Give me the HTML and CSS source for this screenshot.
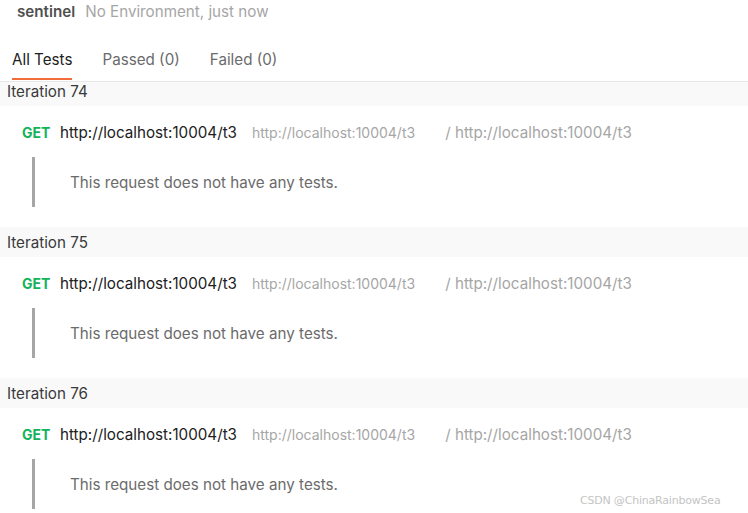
FILE: index.html
```html
<!DOCTYPE html>
<html>
<head>
<meta charset="utf-8">
<link rel="stylesheet" href="styles.css">
</head>
<body>
<div class="page">
  <header class="runhead">
    <span class="colname">sentinel</span>
    <span class="meta">No Environment, just now</span>
  </header>
  <nav class="tabs">
    <span class="tab active">All Tests</span>
    <span class="tab">Passed (0)</span>
    <span class="tab">Failed (0)</span>
  </nav>
  <div class="viewport">
    <div class="list">
      <section class="iteration">
        <div class="iter-title">Iteration 74</div>
        <div class="request">
          <div class="req-row">
            <span class="method">GET</span>
            <span class="url">http://localhost:10004/t3</span>
            <span class="url-sub">http://localhost:10004/t3</span>
            <span class="path">/ http://localhost:10004/t3</span>
          </div>
          <div class="tests"><span>This request does not have any tests.</span></div>
        </div>
      </section>
      <section class="iteration">
        <div class="iter-title">Iteration 75</div>
        <div class="request">
          <div class="req-row">
            <span class="method">GET</span>
            <span class="url">http://localhost:10004/t3</span>
            <span class="url-sub">http://localhost:10004/t3</span>
            <span class="path">/ http://localhost:10004/t3</span>
          </div>
          <div class="tests"><span>This request does not have any tests.</span></div>
        </div>
      </section>
      <section class="iteration">
        <div class="iter-title">Iteration 76</div>
        <div class="request">
          <div class="req-row">
            <span class="method">GET</span>
            <span class="url">http://localhost:10004/t3</span>
            <span class="url-sub">http://localhost:10004/t3</span>
            <span class="path">/ http://localhost:10004/t3</span>
          </div>
          <div class="tests"><span>This request does not have any tests.</span></div>
        </div>
      </section>
    </div>
  </div>
  <div class="watermark">CSDN @ChinaRainbowSea</div>
</div>
</body>
</html>
```
FILE: styles.css
```css
* { box-sizing: border-box; }
html, body { margin: 0; padding: 0; background: #ffffff; }
body {
  font-family: Inter, "Noto Sans", "Liberation Sans", sans-serif;
  font-size: 15.2px;
  color: #212121;
}
.page {
  position: relative;
  width: 748px;
  height: 513px;
  overflow: hidden;
}
.runhead {
  display: flex;
  align-items: center;
  height: 22px;
  padding-left: 17px;
  gap: 10px;
}
.colname { font-weight: 600; color: #505050; }
.meta { color: #a6a6a6; }
.tabs {
  display: flex;
  margin-top: 26px;
  padding-left: 12px;
  gap: 30px;
  border-bottom: 1px solid #e8e8e8;
  height: 34px;
}
.tab {
  color: #6b6b6b;
  height: 32px;
  padding-top: 1px;
  line-height: 22px;
}
.tab.active {
  color: #212121;
  border-bottom: 2px solid #f26b3a;
}
.viewport {
  height: 431px;
  overflow: hidden;
}
.list { margin-top: -6px; }
.iter-title {
  height: 30px;
  line-height: 32px;
  padding-left: 7px;
  background: #f9f9f9;
  color: #3a3a3a;
}
.request { padding: 14px 0 20px 22px; }
.req-row {
  display: flex;
  align-items: center;
  height: 24px;
  white-space: nowrap;
}
.method {
  color: #13b35a;
  font-weight: 700;
  font-size: 14px;
  width: 38px;
}
.url { color: #212121; }
.url-sub {
  color: #a6a6a6;
  font-size: 14px;
  margin-left: 15px;
}
.path {
  color: #a6a6a6;
  margin-left: 30px;
}
.tests {
  margin: 13px 0 0 10px;
  height: 50px;
  border-left: 3px solid #a6a6a6;
  display: flex;
  align-items: center;
  padding-left: 35px;
  color: #6b6b6b;
}
.watermark {
  position: absolute;
  left: 580px;
  top: 494px;
  font-family: "DejaVu Sans", sans-serif;
  font-size: 11px;
  color: #c4c4c4;
  letter-spacing: -0.2px;
}
```
